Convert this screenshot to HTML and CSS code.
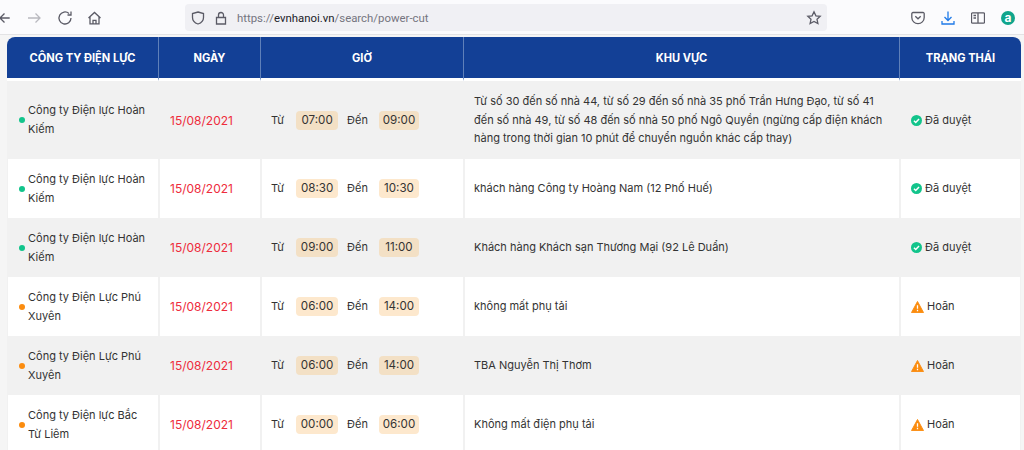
FILE: index.html
```html
<!doctype html>
<html>
<head>
  <title>Power cut schedule</title>
  <link rel="stylesheet" href="styles.css">
</head>
<body>

<!-- browser toolbar -->
<div class="toolbar">
  <div class="nav-icons">
    <svg class="icon back" width="16" height="16" viewBox="0 0 16 16"><path d="M12.7 8H3M7.5 3.5L3 8l4.5 4.5"/></svg>
    <svg class="icon forward" width="16" height="16" viewBox="0 0 16 16"><path d="M1 8h12M8.5 3.5L13 8l-4.500 4.500"/></svg>
    <svg class="icon" width="16" height="16" viewBox="0 0 16 16"><path d="M14 8a6 6 0 1 1-2-4.500M14 1.500v3.500h-3.500"/></svg>
    <svg class="icon" width="16" height="16" viewBox="0 0 16 16"><path d="M1.500 8L7.500 2.500 13.500 8M3 6.800v7h9v-7M6 13.800v-3.500h3v3.500"/></svg>
  </div>
  <div class="urlbar">
    <svg class="icon" width="16" height="16" viewBox="0 0 16 16"><path d="M8 2l5.500 1.500v4c0 3.500-2.500 5.500-5.500 6.500-3-1-5.500-3-5.500-6.500v-4z"/></svg>
    <svg class="icon" width="16" height="16" viewBox="0 0 16 16"><path d="M3.500 7.500h9v6.500h-9zM5.500 7.500V5a2.500 2.500 0 0 1 5 0v2.500"/></svg>
    <span class="url">https://<b>evnhanoi.vn</b>/search/power-cut</span>
    <svg class="icon star" width="16" height="16" viewBox="0 0 16 16"><path d="M8 1.800l1.900 4 4.300.5-3.200 3 .9 4.300L8 11.500l-3.900 2.100.9-4.300-3.200-3 4.300-.5z"/></svg>
  </div>
  <div class="tool-icons">
    <svg class="icon" width="14" height="14" viewBox="0 0 14 14"><path d="M2 1.500h10a1.200 1.200 0 0 1 1.200 1.200v3.800a6.200 6.200 0 0 1-12.400 0V2.700A1.200 1.200 0 0 1 2 1.500zM4.300 5.300L7 7.800l2.700-2.500"/></svg>
    <svg class="icon blue" width="14" height="14" viewBox="0 0 14 14"><path d="M7 .5v9M3.500 6L7 9.500 10.500 6M1 10v3h12v-3"/></svg>
    <svg class="icon" width="14" height="14" viewBox="0 0 14 14"><path d="M1.500 1.800h11a1 1 0 0 1 1 1v8.400a1 1 0 0 1-1 1h-11a1 1 0 0 1-1-1V2.800a1 1 0 0 1 1-1zM7 1.800v10.400M2.500 4.500H5M2.500 7H5"/></svg>
    <span class="ext-badge">a</span>
  </div>
</div>

<div class="content">
  <table class="cut-table">
    <colgroup>
      <col class="col-company"><col class="col-date"><col class="col-time"><col class="col-area"><col class="col-status">
    </colgroup>
    <thead>
      <tr>
        <th>CÔNG TY ĐIỆN LỰC</th>
        <th>NGÀY</th>
        <th>GIỜ</th>
        <th>KHU VỰC</th>
        <th>TRẠNG THÁI</th>
      </tr>
    </thead>
    <tbody>
      <tr class="tall">
        <td><div class="company"><span class="dot green"></span><span>Công ty Điện lực Hoàn Kiếm</span></div></td>
        <td class="date">15/08/2021</td>
        <td><div class="time"><span>Từ</span><span class="pill from">07:00</span><span>Đến</span><span class="pill">09:00</span></div></td>
        <td class="area">Từ số 30 đến số nhà 44, từ số 29 đến số nhà 35 phố Trần Hưng Đạo, từ số 41 đến số nhà 49, từ số 48 đến số nhà 50 phố Ngô Quyền (ngừng cấp điện khách hàng trong thời gian 10 phút để chuyển nguồn khác cấp thay)</td>
        <td class="state"><div class="status"><svg width="11" height="11" viewBox="0 0 13 13"><circle cx="6.500" cy="6.500" r="6.500" fill="#12c48b"/><path d="M3.500 6.800l2.100 2 3.900-4" fill="none" stroke="#fff" stroke-width="1.800"/></svg>Đã duyệt</div></td>
      </tr>
      <tr>
        <td><div class="company"><span class="dot green"></span><span>Công ty Điện lực Hoàn Kiếm</span></div></td>
        <td class="date">15/08/2021</td>
        <td><div class="time"><span>Từ</span><span class="pill from">08:30</span><span>Đến</span><span class="pill">10:30</span></div></td>
        <td class="area">khách hàng Công ty Hoàng Nam (12 Phố Huế)</td>
        <td class="state"><div class="status"><svg width="11" height="11" viewBox="0 0 13 13"><circle cx="6.500" cy="6.500" r="6.500" fill="#12c48b"/><path d="M3.500 6.800l2.100 2 3.900-4" fill="none" stroke="#fff" stroke-width="1.800"/></svg>Đã duyệt</div></td>
      </tr>
      <tr>
        <td><div class="company"><span class="dot green"></span><span>Công ty Điện lực Hoàn Kiếm</span></div></td>
        <td class="date">15/08/2021</td>
        <td><div class="time"><span>Từ</span><span class="pill from">09:00</span><span>Đến</span><span class="pill">11:00</span></div></td>
        <td class="area">Khách hàng Khách sạn Thương Mại (92 Lê Duẩn)</td>
        <td class="state"><div class="status"><svg width="11" height="11" viewBox="0 0 13 13"><circle cx="6.500" cy="6.500" r="6.500" fill="#12c48b"/><path d="M3.500 6.800l2.100 2 3.900-4" fill="none" stroke="#fff" stroke-width="1.800"/></svg>Đã duyệt</div></td>
      </tr>
      <tr>
        <td><div class="company"><span class="dot orange"></span><span>Công ty Điện Lực Phú Xuyên</span></div></td>
        <td class="date">15/08/2021</td>
        <td><div class="time"><span>Từ</span><span class="pill from">06:00</span><span>Đến</span><span class="pill">14:00</span></div></td>
        <td class="area">không mất phụ tải</td>
        <td class="state"><div class="status"><svg width="13" height="12" viewBox="0 0 14 13"><path d="M7 .5L13.500 12.500H.5z" fill="#fb8c0f" stroke="#fb8c0f" stroke-linejoin="round"/><path d="M7 4.500v4M7 9.600v1.500" stroke="#fff" stroke-width="1.400"/></svg>Hoãn</div></td>
      </tr>
      <tr>
        <td><div class="company"><span class="dot orange"></span><span>Công ty Điện Lực Phú Xuyên</span></div></td>
        <td class="date">15/08/2021</td>
        <td><div class="time"><span>Từ</span><span class="pill from">06:00</span><span>Đến</span><span class="pill">14:00</span></div></td>
        <td class="area">TBA Nguyễn Thị Thơm</td>
        <td class="state"><div class="status"><svg width="13" height="12" viewBox="0 0 14 13"><path d="M7 .5L13.500 12.500H.5z" fill="#fb8c0f" stroke="#fb8c0f" stroke-linejoin="round"/><path d="M7 4.500v4M7 9.600v1.500" stroke="#fff" stroke-width="1.400"/></svg>Hoãn</div></td>
      </tr>
      <tr>
        <td><div class="company"><span class="dot orange"></span><span>Công ty Điện lực Bắc Từ Liêm</span></div></td>
        <td class="date">15/08/2021</td>
        <td><div class="time"><span>Từ</span><span class="pill from">00:00</span><span>Đến</span><span class="pill">06:00</span></div></td>
        <td class="area">Không mất điện phụ tải</td>
        <td class="state"><div class="status"><svg width="13" height="12" viewBox="0 0 14 13"><path d="M7 .5L13.500 12.500H.5z" fill="#fb8c0f" stroke="#fb8c0f" stroke-linejoin="round"/><path d="M7 4.500v4M7 9.600v1.500" stroke="#fff" stroke-width="1.400"/></svg>Hoãn</div></td>
      </tr>
    </tbody>
  </table>
</div>

</body>
</html>
```

FILE: styles.css
```css
html, body {
  margin: 0;
  height: 450px;
  overflow: hidden;
}

body {
  background: #fff;
  font-family: Inter, "Noto Sans", sans-serif;
  color: #333;
}

.toolbar {
  height: 35px;
  box-sizing: border-box;
  padding-top: 4px;
  background: #fbfbfd;
  border-bottom: 1px solid #e3e3e5;
  display: flex;
  align-items: flex-start;
}

.icon {
  fill: none;
  stroke: #5b5b66;
  stroke-width: 1.3;
  flex: none;
}

.icon.blue {
  stroke: #1f7ae8;
}

.nav-icons {
  width: 185px;
  height: 27px;
  display: flex;
  align-items: center;
  gap: 14px;
  overflow: hidden;
}

.nav-icons .back {
  margin-left: -3px;
}

.nav-icons .forward {
  stroke: #b9b9bf;
}

.urlbar {
  width: 642px;
  height: 27px;
  background: #f0f0f4;
  border-radius: 4px;
  display: flex;
  align-items: center;
  gap: 7px;
  padding: 0 5px 0 5px;
  box-sizing: border-box;
}

.url {
  font-family: Roboto, sans-serif;
  font-size: 11.4px;
  color: #75757f;
  margin-left: 1px;
  flex: 1;
}

.url b {
  font-weight: 400;
  color: #202028;
}

.tool-icons {
  flex: 1;
  height: 27px;
  display: flex;
  align-items: center;
  gap: 16px;
  padding-left: 84px;
}

.ext-badge {
  width: 14px;
  height: 14px;
  border-radius: 50%;
  background: #10a58c;
  color: #fff;
  font-size: 12px;
  font-weight: 700;
  line-height: 13px;
  text-align: center;
}

.content {
  height: 413px;
  padding: 2px 3px 0 7px;
  background: #f5f5f5;
  overflow: hidden;
}

.cut-table {
  width: 1014px;
  table-layout: fixed;
  border-collapse: separate;
  border-spacing: 0;
  font-size: 11px;
  background: #fff;
  border-radius: 8px 8px 0 0;
}

.col-company { width: 151px; }
.col-date { width: 102px; }
.col-time { width: 203px; }
.col-area { width: 436px; }
.col-status { width: 122px; }

.cut-table th {
  height: 41px;
  padding: 0;
  background: #134096;
  color: #fff;
  font-size: 11.1px;
  font-weight: 700;
  border-left: 1px solid #5f80b9;
  border-bottom: 3px solid #fff;
}

.cut-table th:first-child {
  border-left: none;
  border-top-left-radius: 8px;
}

.cut-table th:last-child {
  border-top-right-radius: 8px;
}

.cut-table td {
  height: 59px;
  padding: 0 9px;
  box-sizing: border-box;
  border-left: 2px solid #f1f1f1;
  line-height: 19px;
  vertical-align: middle;
}

.cut-table td:first-child {
  border-left: 1px solid #f1f1f1;
  padding: 0 8px 0 11px;
}

.cut-table td:last-child {
  border-right: 1px solid #f1f1f1;
}

.cut-table tr.tall td {
  height: 78px;
}

.cut-table tbody tr:nth-child(odd) td {
  background: #f1f1f1;
}

.company {
  display: flex;
  align-items: center;
  gap: 3px;
}

.dot {
  width: 6px;
  height: 6px;
  border-radius: 50%;
  flex: none;
}

.dot.green { background: #12c48b; }
.dot.orange { background: #fb8c0f; }

.cut-table td.date {
  color: #ee2c3c;
  font-size: 12px;
  padding-left: 10px;
}

.cut-table td.area {
  line-height: 18.5px;
}

.cut-table td.state {
  padding-left: 10px;
}

.time {
  display: flex;
  align-items: center;
}

.pill {
  background: #fde8cd;
  border-radius: 4px;
  height: 19px;
  line-height: 19px;
  width: 40px;
  text-align: center;
  font-size: 11.6px;
  margin-left: 11px;
}

.pill.from {
  width: 42px;
  margin-left: 12px;
  margin-right: 9px;
}

tbody tr:nth-child(odd) .pill {
  background: #f3e0c5;
}

.status {
  display: flex;
  align-items: center;
  gap: 3px;
}
```
